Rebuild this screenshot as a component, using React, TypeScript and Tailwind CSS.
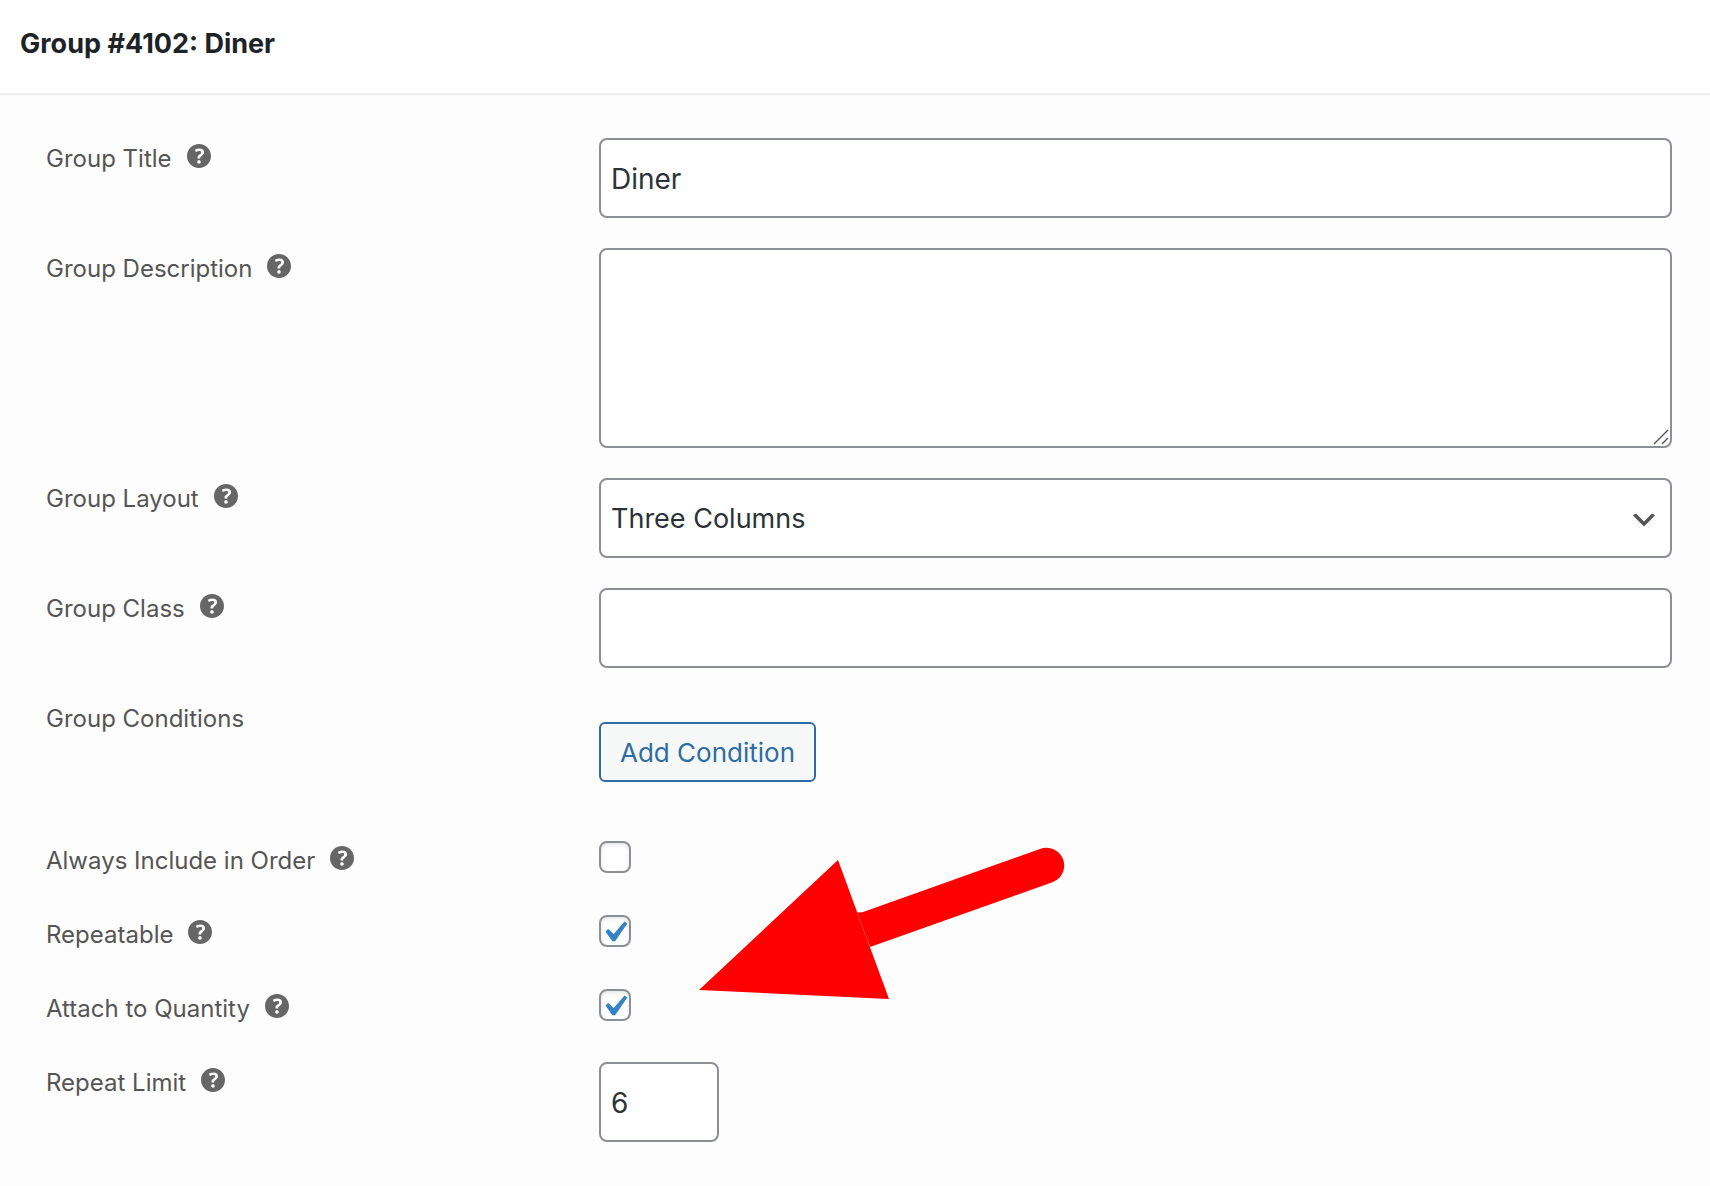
import { ReactNode, useState } from 'react';

interface FieldRowProps {
  id: string;
  label: string;
  help?: string;
  children: ReactNode;
}

interface CheckboxProps {
  id: string;
  defaultChecked?: boolean;
}

const controlClass =
  'block rounded-lg border-2 border-[#8c8f94] bg-white px-[10px] text-[#2c3338] outline-none focus:border-[#2271b1]';

function HelpIcon() {
  return (
    <svg viewBox="3 3 14 14" className="size-6" fill="#666" aria-hidden="true">
      <path d="M17 10c0-3.87-3.14-7-7-7-3.87 0-7 3.13-7 7s3.13 7 7 7c3.86 0 7-3.13 7-7zm-6.3 1.48H9.14v-.43c0-.38.08-.7.24-.98s.46-.57.88-.89c.41-.29.68-.53.81-.71.14-.18.2-.39.2-.62 0-.25-.09-.44-.28-.58-.19-.13-.45-.19-.79-.19-.58 0-1.25.19-2 .57l-.64-1.28c.87-.49 1.8-.74 2.77-.74.81 0 1.45.2 1.92.58.48.39.71.91.71 1.55 0 .43-.09.8-.29 1.11-.19.32-.57.67-1.11 1.06-.38.28-.61.49-.71.63-.1.15-.15.34-.15.57v.35zm-1.47 2.74c-.18-.17-.27-.42-.27-.73 0-.33.08-.58.26-.75s.43-.25.77-.25c.32 0 .57.09.75.26s.27.42.27.74c0 .3-.09.55-.27.72-.18.18-.43.27-.75.27-.33 0-.58-.09-.76-.27z" />
    </svg>
  );
}

function FieldRow({ id, label, help, children }: FieldRowProps) {
  return (
    <div className="grid grid-cols-[553px_1fr] items-start">
      <div className="flex items-start gap-[15px]">
        <label htmlFor={id} className="text-2xl leading-[42px] text-[#555]">
          {label}
        </label>
        {help && (
          <button type="button" aria-label={help} className="mt-1.5 cursor-help">
            <HelpIcon />
          </button>
        )}
      </div>
      <div className="relative min-h-11">{children}</div>
    </div>
  );
}

function Checkbox({ id, defaultChecked = false }: CheckboxProps) {
  return (
    <div className="relative mt-px size-8">
      <input
        id={id}
        type="checkbox"
        defaultChecked={defaultChecked}
        className="peer block size-8 appearance-none rounded-lg border-2 border-[#8c8f94] bg-white shadow-[inset_0_2px_4px_rgba(0,0,0,0.1)]"
      />
      <svg
        viewBox="2.7 1.8 15.2 15.2"
        className="pointer-events-none absolute inset-0 hidden size-8 peer-checked:block"
        fill="#3582c4"
        aria-hidden="true"
      >
        <path d="M14.83 4.89l1.34.94-5.81 8.38H9.02L5.78 9.67l1.34-1.25 2.57 2.4z" />
      </svg>
    </div>
  );
}

// Red callout arrow that floats over the checkbox rows
function CalloutArrow() {
  return (
    <svg
      viewBox="0 0 368 156"
      className="pointer-events-none absolute -top-[68px] left-[100px] h-[156px] w-[368px]"
      fill="#f00"
      aria-hidden="true"
    >
      <path d="M0 144L139 14L190 153Z" />
      <path d="M158 66.5Q162 67 167 65L341 3A17.5 17.5 0 0 1 354 36L171 101Z" />
      <path d="M158.5 68L170.5 100" stroke="#ff5a4a" strokeWidth="0.5" />
    </svg>
  );
}

export default function App() {
  const [title, setTitle] = useState('Diner');

  return (
    <div className="min-h-screen bg-[#fdfdfd] font-['Inter',sans-serif]">
      {/* Header */}
      <header className="border-b-2 border-[#eee] bg-white px-5 pt-6 pb-[29px]">
        <h1 className="text-[27px] leading-10 font-bold text-[#1d2327]">Group #4102: Diner</h1>
      </header>

      {/* Group settings */}
      <form className="flex flex-col gap-[30px] pt-[43px] pr-[38px] pb-[42px] pl-[46px]">
        <FieldRow id="group-title" label="Group Title" help="Help: Group Title">
          <input
            id="group-title"
            type="text"
            value={title}
            onChange={(e) => setTitle(e.target.value)}
            className={`${controlClass} h-20 w-full pt-0.5 text-[28px]`}
          />
        </FieldRow>

        <FieldRow id="group-description" label="Group Description" help="Help: Group Description">
          <textarea
            id="group-description"
            className={`${controlClass} h-[200px] w-full resize-none py-1 text-[28px]`}
          />
          <svg
            viewBox="0 0 16 16"
            className="pointer-events-none absolute right-[3px] bottom-[3px] size-4"
            fill="none"
            stroke="#555"
            strokeWidth="1.4"
            aria-hidden="true"
          >
            <path d="M1 15L15 1M9 15L15 9" />
          </svg>
        </FieldRow>

        <FieldRow id="group-layout" label="Group Layout" help="Help: Group Layout">
          <select
            id="group-layout"
            defaultValue="three"
            className={`${controlClass} h-20 w-full appearance-none pt-0.5 text-[27px]`}
          >
            <option value="one">One Column</option>
            <option value="two">Two Columns</option>
            <option value="three">Three Columns</option>
          </select>
          <svg
            viewBox="0 0 20 20"
            className="pointer-events-none absolute top-[26px] right-3 size-8"
            fill="#555"
            aria-hidden="true"
          >
            <path d="M5 6l5 5 5-5 2 1-7 7-7-7 2-1z" />
          </svg>
        </FieldRow>

        <FieldRow id="group-class" label="Group Class" help="Help: Group Class">
          <input
            id="group-class"
            type="text"
            className={`${controlClass} h-20 w-full pt-0.5 text-[28px]`}
          />
        </FieldRow>

        <FieldRow id="add-condition" label="Group Conditions">
          <div className="pt-6 pb-7">
            <button
              id="add-condition"
              type="button"
              className="block h-[60px] rounded-md border-2 border-[#2e6da4] bg-[#f6f7f7] px-[19px] text-[26px] text-[#2e6da4]"
            >
              Add Condition
            </button>
          </div>
        </FieldRow>

        <FieldRow id="always-include" label="Always Include in Order" help="Help: Always Include in Order">
          <Checkbox id="always-include" />
        </FieldRow>

        <FieldRow id="repeatable" label="Repeatable" help="Help: Repeatable">
          <Checkbox id="repeatable" defaultChecked />
          <CalloutArrow />
        </FieldRow>

        <FieldRow id="attach-quantity" label="Attach to Quantity" help="Help: Attach to Quantity">
          <Checkbox id="attach-quantity" defaultChecked />
        </FieldRow>

        <FieldRow id="repeat-limit" label="Repeat Limit" help="Help: Repeat Limit">
          <input
            id="repeat-limit"
            type="text"
            inputMode="numeric"
            defaultValue="6"
            className={`${controlClass} h-20 w-[120px] pt-0.5 text-[28px]`}
          />
        </FieldRow>
      </form>
    </div>
  );
}
